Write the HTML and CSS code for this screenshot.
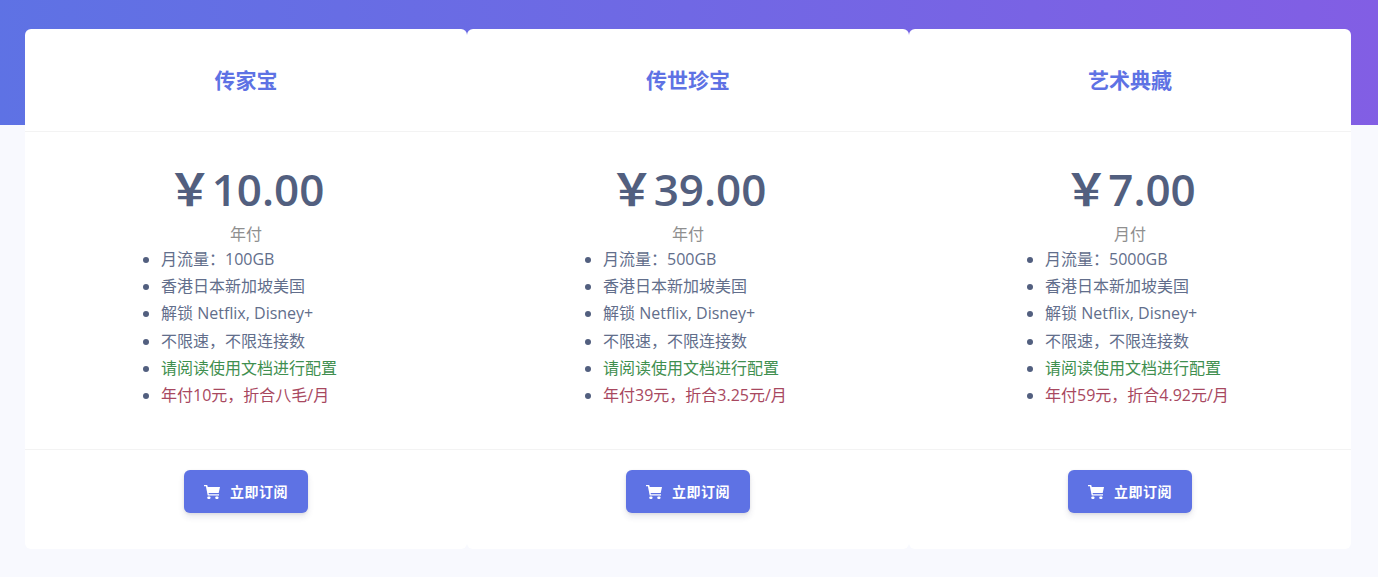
FILE: index.html
```html
<!DOCTYPE html>
<html lang="zh-CN">
<head>
    <meta charset="UTF-8">
    <title>订阅套餐</title>
    <link rel="stylesheet" href="styles.css">
</head>
<body>

<div class="hero"></div>

<div class="deck">
    <div class="card">
        <div class="card-header"><h4 class="plan-name">传家宝</h4></div>
        <div class="card-body">
            <div class="price">￥10.00</div>
            <div class="period">年付</div>
            <ul class="features">
                <li><span class="feat">月流量：100GB</span></li>
                <li><span class="feat">香港日本新加坡美国</span></li>
                <li><span class="feat">解锁 Netflix, Disney+</span></li>
                <li><span class="feat">不限速，不限连接数</span></li>
                <li><span class="note-green">请阅读使用文档进行配置</span></li>
                <li><span class="note-red">年付10元，折合八毛/月</span></li>
            </ul>
        </div>
        <div class="card-footer">
            <a class="btn" href="#">
                <svg class="cart" viewBox="0 0 16 14"><path d="M0 0h3.2l.6 2H16l-1.3 6H4.6l.3 1.2H15v1.3H3.7L1.9 1.3H0z"/><rect x="3.4" y="11.5" width="3" height="2.5" rx=".8"/><rect x="11.4" y="11.5" width="3" height="2.5" rx=".8"/></svg>
                立即订阅
            </a>
        </div>
    </div>
    <div class="card">
        <div class="card-header"><h4 class="plan-name">传世珍宝</h4></div>
        <div class="card-body">
            <div class="price">￥39.00</div>
            <div class="period">年付</div>
            <ul class="features">
                <li><span class="feat">月流量：500GB</span></li>
                <li><span class="feat">香港日本新加坡美国</span></li>
                <li><span class="feat">解锁 Netflix, Disney+</span></li>
                <li><span class="feat">不限速，不限连接数</span></li>
                <li><span class="note-green">请阅读使用文档进行配置</span></li>
                <li><span class="note-red">年付39元，折合3.25元/月</span></li>
            </ul>
        </div>
        <div class="card-footer">
            <a class="btn" href="#">
                <svg class="cart" viewBox="0 0 16 14"><path d="M0 0h3.2l.6 2H16l-1.3 6H4.6l.3 1.2H15v1.3H3.7L1.9 1.3H0z"/><rect x="3.4" y="11.5" width="3" height="2.5" rx=".8"/><rect x="11.4" y="11.5" width="3" height="2.5" rx=".8"/></svg>
                立即订阅
            </a>
        </div>
    </div>
    <div class="card">
        <div class="card-header"><h4 class="plan-name">艺术典藏</h4></div>
        <div class="card-body">
            <div class="price">￥7.00</div>
            <div class="period">月付</div>
            <ul class="features">
                <li><span class="feat">月流量：5000GB</span></li>
                <li><span class="feat">香港日本新加坡美国</span></li>
                <li><span class="feat">解锁 Netflix, Disney+</span></li>
                <li><span class="feat">不限速，不限连接数</span></li>
                <li><span class="note-green">请阅读使用文档进行配置</span></li>
                <li><span class="note-red">年付59元，折合4.92元/月</span></li>
            </ul>
        </div>
        <div class="card-footer">
            <a class="btn" href="#">
                <svg class="cart" viewBox="0 0 16 14"><path d="M0 0h3.2l.6 2H16l-1.3 6H4.6l.3 1.2H15v1.3H3.7L1.9 1.3H0z"/><rect x="3.4" y="11.5" width="3" height="2.5" rx=".8"/><rect x="11.4" y="11.5" width="3" height="2.5" rx=".8"/></svg>
                立即订阅
            </a>
        </div>
    </div>
</div>

</body>
</html>
```

FILE: styles.css
```css
body {
    margin: 0;
    background-color: #f8f9fe;
    color: #525f7f;
    font-family: "Open Sans", "Noto Sans CJK SC", sans-serif;
    font-size: 16px;
    line-height: 1.7;
}
.hero {
    height: 125px;
    background: linear-gradient(87deg, #5e72e4, #825ee4);
}
.deck {
    display: flex;
    margin: -96px 27px 28px 25px;
}
.card {
    flex: 1;
    background-color: #fff;
    border-radius: 6px;
}
.card-header {
    height: 102px;
    display: flex;
    align-items: center;
    justify-content: center;
    border-bottom: 1px solid #f3f3f3;
}
.plan-name {
    margin: 2px 0 0;
    color: #5e72e4;
    font-size: 21px;
    font-weight: 700;
    line-height: 1.5;
}
.card-body {
    height: 317px;
    box-sizing: border-box;
    padding-top: 24px;
    text-align: center;
}
.price {
    font-size: 44px;
    font-weight: 600;
    line-height: 66px;
}
.period {
    color: #8f8f8f;
    line-height: 24px;
}
.features {
    margin: 0;
    padding-left: 136px;
    text-align: left;
}
.feat {
    color: #626e8b;
}
.note-green {
    color: #3f8f4f;
}
.note-red {
    color: #a8485f;
}
.card-footer {
    height: 100px;
    box-sizing: border-box;
    padding-top: 20px;
    text-align: center;
    border-top: 1px solid #f3f3f3;
}
.btn {
    display: inline-flex;
    align-items: center;
    gap: 10px;
    width: 124px;
    height: 43px;
    box-sizing: border-box;
    padding: 0 20px;
    background-color: #5e72e4;
    border-radius: 6px;
    color: #fff;
    font-size: 14px;
    font-weight: 700;
    letter-spacing: 0.5px;
    white-space: nowrap;
    text-decoration: none;
    box-shadow: 0 4px 6px rgba(50, 50, 93, 0.11), 0 1px 3px rgba(0, 0, 0, 0.08);
}
.cart {
    width: 16px;
    height: 14px;
    fill: #fff;
}
```
